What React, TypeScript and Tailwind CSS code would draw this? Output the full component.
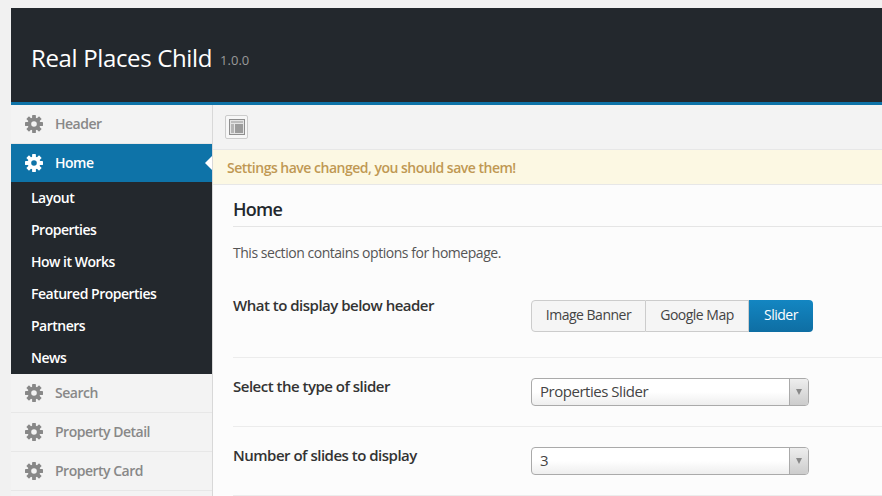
import React from "react";

const subItems = ["Layout", "Properties", "How it Works", "Featured Properties", "Partners", "News"];

function Gear({ className }: { className: string }) {
  const teeth = [0, 45, 90, 135, 180, 225, 270, 315];
  return (
    <svg viewBox="0 0 18 18" className={className} fill="currentColor">
      {teeth.map((deg) => (
        <rect key={deg} x="7.1" y="0" width="3.8" height="5" rx="0.4" transform={`rotate(${deg} 9 9)`} />
      ))}
      <circle cx="9" cy="9" r="4.6" fill="none" stroke="currentColor" strokeWidth="3.6" />
    </svg>
  );
}

function MenuItem({ label }: { label: string }) {
  return (
    <div className="flex h-[39px] items-center border-b border-[#e7e7e7] bg-[#f3f3f3] pl-[14px]">
      <Gear className="h-[18px] w-[18px] text-[#888888]" />
      <span className="mb-[1px] ml-[12px] text-[14px] font-semibold tracking-[-0.5px] text-[#888888]">{label}</span>
    </div>
  );
}

function Sidebar() {
  return (
    <aside className="w-[202px] shrink-0 border-r border-[#d8d8d8] bg-[#f3f3f3]">
      <MenuItem label="Header" />
      <div className="relative flex h-[38px] items-center bg-[#0e73a8] pl-[14px]">
        <Gear className="h-[18px] w-[18px] text-white" />
        <span className="mb-[1px] ml-[12px] text-[14px] font-semibold tracking-[-0.5px] text-white">Home</span>
        <span className="absolute right-0 top-[12px] h-0 w-0 border-y-[7px] border-r-[7px] border-y-transparent border-r-white" />
      </div>
      <ul className="flex h-[192px] flex-col bg-[#23282d] pl-5">
        {subItems.map((item) => (
          <li key={item} className="flex h-[32px] items-center pb-[1px] text-[14px] font-semibold tracking-[-0.5px] text-white">
            {item}
          </li>
        ))}
      </ul>
      <MenuItem label="Search" />
      <MenuItem label="Property Detail" />
      <MenuItem label="Property Card" />
    </aside>
  );
}

function LayoutIcon() {
  return (
    <svg viewBox="0 0 16 16" className="h-[16px] w-[16px]">
      <rect x="0.5" y="0.5" width="15" height="15" fill="#e4e4e4" stroke="#8f8f8f" />
      <rect x="2" y="2" width="12" height="2" fill="#bdbdbd" />
      <rect x="2" y="5" width="3" height="9" fill="#b5b5b5" />
      <rect x="6" y="5" width="8" height="9" fill="#9c9c9c" />
    </svg>
  );
}

function Field({ label, value }: { label: string; value: string }) {
  return (
    <div className="flex h-[69px] border-b border-[#ececec]">
      <div className="w-[298px] shrink-0 pt-[17px] text-[15px] font-semibold tracking-[-0.5px] text-[#333333]">{label}</div>
      <div className="pt-[20px]">
        <div className="flex h-[28px] w-[278px] items-center overflow-hidden rounded-[4px] border border-[#aaaaaa] bg-gradient-to-b from-white from-50% to-[#eeeeee]">
          <span className="flex-1 pb-[1px] pl-2 text-[15px] tracking-[-0.47px] text-[#444444]">{value}</span>
          <span className="flex h-full w-[19px] items-center justify-center border-l border-[#aaaaaa] bg-gradient-to-b from-[#eeeeee] to-[#cccccc]">
            <span className="h-0 w-0 border-x-[3.5px] border-t-[6px] border-x-transparent border-t-[#888888]" />
          </span>
        </div>
      </div>
    </div>
  );
}

function Content() {
  return (
    <main className="min-w-0 flex-1 bg-[#fcfcfc]">
      <div className="flex h-[45px] items-center border-b border-[#e7e7e7] bg-[#f3f3f3] pl-[12px]">
        <span className="flex h-[24px] w-[23px] items-center justify-center rounded-[2px] border border-[#cccccc] bg-[#f7f7f7]">
          <LayoutIcon />
        </span>
      </div>
      <div className="flex h-[35px] items-center border-b border-[#e7e7e7] bg-[#fcf8e3] pl-[14px] text-[14px] font-semibold tracking-[-0.5px] text-[#c09853]">
        Settings have changed, you should save them!
      </div>
      <div className="pl-[20px]">
        <h2 className="flex h-[42px] items-end border-b border-[#e5e5e5] pb-[3px] text-[18px] font-semibold tracking-[-0.75px] text-[#23282d]">
          Home
        </h2>
        <p className="pt-[16px] text-[14px] leading-[20px] tracking-[-0.47px] text-[#555555]">This section contains options for homepage.</p>
        <div className="flex h-[95px] border-b border-[#ececec]">
          <div className="w-[298px] shrink-0 pt-[31px] text-[15px] font-semibold tracking-[-0.5px] text-[#333333]">
            What to display below header
          </div>
          <div className="flex pt-[37px]">
            <div className="flex h-[32px] text-[14px] tracking-[-0.5px]">
              <span className="flex w-[115px] items-center justify-center rounded-l-[4px] border border-[#cccccc] bg-[#f5f5f5] pb-[3px] text-[#444444]">
                Image Banner
              </span>
              <span className="flex w-[103px] items-center justify-center border-y border-r border-[#cccccc] bg-[#f5f5f5] pb-[3px] text-[#444444]">
                Google Map
              </span>
              <span className="flex w-[64px] items-center justify-center rounded-r-[4px] bg-gradient-to-b from-[#1386c2] to-[#0e6ea3] pb-[3px] text-white">
                Slider
              </span>
            </div>
          </div>
        </div>
        <Field label="Select the type of slider" value="Properties Slider" />
        <Field label="Number of slides to display" value="3" />
      </div>
    </main>
  );
}

export default function App() {
  return (
    <div className="h-[496px] w-[882px] overflow-hidden bg-[#f1f1f1] pl-[11px] pt-2 font-['Open_Sans',sans-serif]">
      <header className="flex h-[97px] items-center border-b-[3px] border-[#0e73a8] bg-[#23282d] pl-5 pt-[5px]">
        <h1 className="text-[24px] tracking-[-0.35px] text-white">Real Places Child</h1>
        <span className="ml-[8px] mt-[6px] text-[13px] text-[#999999]">1.0.0</span>
      </header>
      <div className="flex h-[391px]">
        <Sidebar />
        <Content />
      </div>
    </div>
  );
}
